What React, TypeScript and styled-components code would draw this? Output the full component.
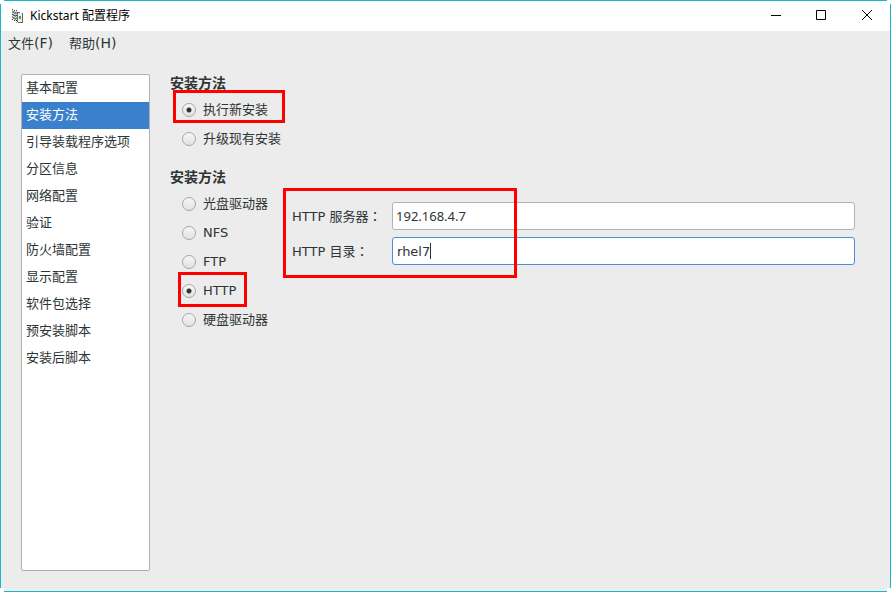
import React, { useState } from "react";
import styled, { createGlobalStyle } from "styled-components";

const uiFont = `"DejaVu Sans", "Noto Sans CJK SC", sans-serif`;
const numericFont = `"Noto Sans", "Noto Sans CJK SC", sans-serif`;
const teal = "#1cb6c4";

const GlobalStyle = createGlobalStyle`
  *, *::before, *::after { box-sizing: border-box; }
  html, body { margin: 0; background: #fff; }
  body { font: 13px/20px ${uiFont}; color: #2e3436; }
`;

const Window = styled.div`
  position: relative;
  display: flex;
  flex-direction: column;
  min-height: 100vh;
  background: #ececec;
  border: 1px solid ${teal};
`;

const Corner = styled.span<{ $v: "top" | "bottom"; $h: "left" | "right" }>`
  position: absolute;
  ${(p) => p.$v}: -1px;
  ${(p) => p.$h}: -1px;
  width: 4px;
  height: 4px;
  background: #fff;
`;

const TitleBar = styled.header`
  display: flex;
  align-items: center;
  height: 30px;
  padding-left: 8px;
  background: #fff;
  color: #000;
`;

const Title = styled.h1`
  flex: 1;
  margin: 0 0 0 5px;
  font: 12px/18px "Noto Sans", "Noto Sans CJK SC", sans-serif;
`;

const WindowButton = styled.button`
  display: grid;
  place-items: center;
  width: 46px;
  height: 30px;
  padding: 0;
  border: 0;
  background: transparent;
  color: #000;
`;

const MenuBar = styled.nav`
  display: flex;
  gap: 16px;
  padding: 2px 7px;
`;

const MenuButton = styled.button`
  height: 20px;
  padding: 0;
  border: 0;
  background: transparent;
  color: inherit;
  font: inherit;
`;

const Accelerator = styled.span`
  font-size: 14px;
`;

const Content = styled.div`
  flex: 1;
  display: flex;
  gap: 20px;
  padding: 19px 35px 20px 20px;
`;

const Sidebar = styled.ul`
  width: 129px;
  flex: none;
  margin: 0;
  padding: 0;
  list-style: none;
  background: #fff;
  border: 1px solid #b0b0b0;
  border-radius: 2px;
`;

const SidebarButton = styled.button<{ $active: boolean }>`
  display: block;
  width: 100%;
  height: 27px;
  padding: 0 4px 1px;
  border: 0;
  text-align: left;
  font: inherit;
  background: ${(p) => (p.$active ? "#3a80cc" : "transparent")};
  color: ${(p) => (p.$active ? "#fff" : "inherit")};
`;

const Main = styled.main`
  flex: 1;
  min-width: 0;
`;

const Section = styled.section`
  margin-bottom: 15px;
`;

const Heading = styled.h2`
  margin: 0;
  font-size: 14px;
  line-height: 18px;
  font-weight: 700;
`;

const Columns = styled.div`
  display: flex;
  align-items: flex-start;
  gap: 24px;
`;

const RadioList = styled.div`
  display: flex;
  flex-direction: column;
  align-items: flex-start;
  padding: 3px 0 0 12px;
`;

const RadioLabel = styled.label`
  position: relative;
  display: flex;
  align-items: center;
  gap: 7px;
  height: 29px;
  white-space: nowrap;
`;

const Radio = styled.input`
  appearance: none;
  width: 14px;
  height: 14px;
  margin: 0;
  border: 1px solid #a5a7a7;
  border-radius: 50%;
  background: linear-gradient(#f6f6f6, #e2e2e2);

  &:checked {
    background: radial-gradient(circle, #2e3436 0 2px, transparent 3px), linear-gradient(#f6f6f6, #e2e2e2);
  }
`;

const Form = styled.div`
  position: relative;
  flex: 1;
  display: grid;
  grid-template-columns: 100px 1fr;
  align-items: center;
  row-gap: 7px;
  padding-top: 16px;
`;

const FieldLabel = styled.label`
  white-space: nowrap;
`;

const Colon = styled.span`
  font-family: "Noto Sans CJK TC", sans-serif;
`;

const Field = styled.div`
  position: relative;
`;

const TextInput = styled.input<{ $numeric?: boolean; $focused?: boolean }>`
  display: block;
  width: 100%;
  height: 28px;
  padding: 0 ${(p) => (p.$numeric ? 3 : 4)}px;
  border: 1px solid ${(p) => (p.$focused ? "#4a90d9" : "#b2b2b2")};
  border-radius: 3px;
  outline: none;
  background: #fff;
  color: #2e3436;
  font-family: ${(p) => (p.$numeric ? numericFont : uiFont)};
  font-size: 13px;
  caret-color: transparent;
`;

const Caret = styled.span`
  position: absolute;
  left: 38px;
  top: 6px;
  width: 1px;
  height: 16px;
  background: #2e3436;
`;

const Highlight = styled.span<{ $top: number; $left: number; $width: number; $height: number }>`
  position: absolute;
  top: ${(p) => p.$top}px;
  left: ${(p) => p.$left}px;
  width: ${(p) => p.$width}px;
  height: ${(p) => p.$height}px;
  border: 3px solid #f00;
  pointer-events: none;
`;

const pages = [
  "基本配置", "安装方法", "引导装载程序选项", "分区信息", "网络配置", "验证",
  "防火墙配置", "显示配置", "软件包选择", "预安装脚本", "安装后脚本",
];
const modes = ["执行新安装", "升级现有安装"];
const sources = ["光盘驱动器", "NFS", "FTP", "HTTP", "硬盘驱动器"];

function AppIcon() {
  return (
    <svg width="16" height="16" viewBox="0 0 16 16" fill="none" aria-hidden="true">
      <path d="M3 1l5 2v11l-5-3z" fill="#ddd" />
      <path d="M8 4l5 1v9l-5-1z" fill="#e9f0e9" />
      <path d="M3.5 1v11M5.5 2v11M7.5 2v13" stroke="#444" strokeDasharray="1 1.5" />
      <path d="M4.5 3v8M6.5 4v8" stroke="#777" strokeDasharray="2 1" />
      <path d="M8.5 4v10M8 4.5h3M13.5 5v10M9 14.5h5" stroke="#666" />
      <path d="M10 8h2v3h-2z" fill="#3fa05b" />
    </svg>
  );
}

export default function App() {
  const [page, setPage] = useState("安装方法");
  const [mode, setMode] = useState(modes[0]);
  const [source, setSource] = useState("HTTP");
  const [server, setServer] = useState("192.168.4.7");
  const [directory, setDirectory] = useState("rhel7");

  return (
    <>
      <GlobalStyle />
      <Window>
        <TitleBar>
          <AppIcon />
          <Title>Kickstart 配置程序</Title>
          <WindowButton aria-label="最小化">
            <svg width="12" height="12" aria-hidden="true"><path d="M2 5.5h10" stroke="currentColor" /></svg>
          </WindowButton>
          <WindowButton aria-label="最大化">
            <svg width="12" height="12" fill="none" aria-hidden="true"><path d="M1.5 .5h9v9h-9z" stroke="currentColor" /></svg>
          </WindowButton>
          <WindowButton aria-label="关闭">
            <svg width="12" height="12" aria-hidden="true"><path d="M1 0l10 10M11 0L1 10" stroke="currentColor" /></svg>
          </WindowButton>
        </TitleBar>
        <MenuBar>
          <MenuButton>文件<Accelerator>(F)</Accelerator></MenuButton>
          <MenuButton>帮助<Accelerator>(H)</Accelerator></MenuButton>
        </MenuBar>
        <Content>
          <Sidebar>
            {pages.map((name) => (
              <li key={name}>
                <SidebarButton $active={name === page} onClick={() => setPage(name)}>{name}</SidebarButton>
              </li>
            ))}
          </Sidebar>
          <Main>
            <Section>
              <Heading>安装方法</Heading>
              <RadioList>
                {modes.map((name, i) => (
                  <RadioLabel key={name}>
                    <Radio type="radio" name="mode" checked={mode === name} onChange={() => setMode(name)} />
                    {name}
                    {i === 0 && <Highlight $top={-5} $left={-9} $width={112} $height={33} />}
                  </RadioLabel>
                ))}
              </RadioList>
            </Section>
            <Section>
              <Heading>安装方法</Heading>
              <Columns>
                <RadioList>
                  {sources.map((name) => (
                    <RadioLabel key={name}>
                      <Radio type="radio" name="source" checked={source === name} onChange={() => setSource(name)} />
                      {name}
                      {name === "HTTP" && <Highlight $top={-4} $left={-4} $width={69} $height={35} />}
                    </RadioLabel>
                  ))}
                </RadioList>
                <Form>
                  <FieldLabel htmlFor="server">HTTP 服务器<Colon>：</Colon></FieldLabel>
                  <Field>
                    <TextInput id="server" $numeric value={server} onChange={(e) => setServer(e.target.value)} />
                  </Field>
                  <FieldLabel htmlFor="directory">HTTP 目录<Colon>：</Colon></FieldLabel>
                  <Field>
                    <TextInput id="directory" $focused value={directory} onChange={(e) => setDirectory(e.target.value)} />
                    <Caret />
                  </Field>
                  <Highlight $top={2} $left={-9} $width={234} $height={90} />
                </Form>
              </Columns>
            </Section>
          </Main>
        </Content>
        <Corner $v="top" $h="left" />
        <Corner $v="top" $h="right" />
        <Corner $v="bottom" $h="left" />
        <Corner $v="bottom" $h="right" />
      </Window>
    </>
  );
}
